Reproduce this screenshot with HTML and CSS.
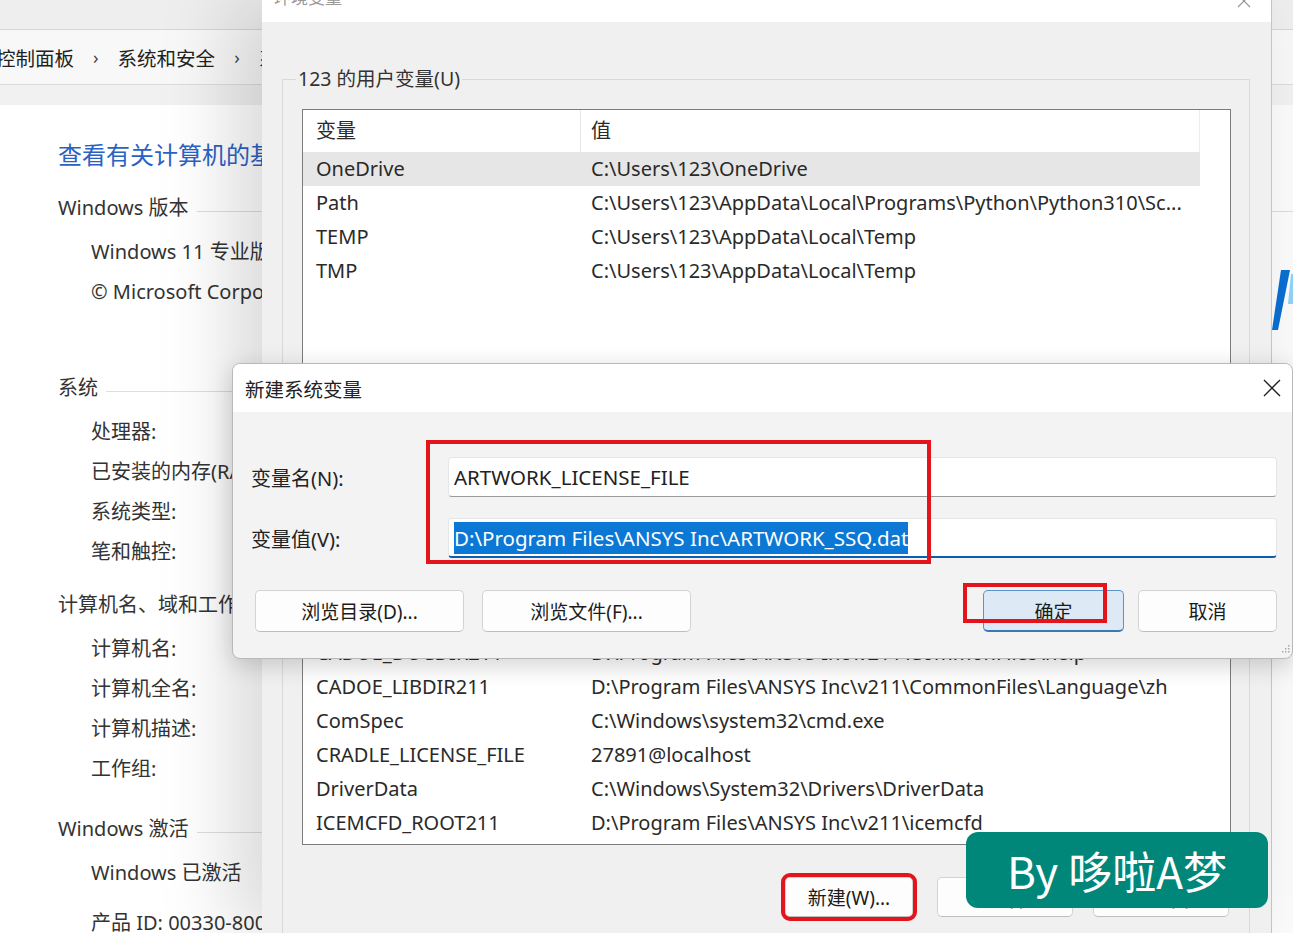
FILE: index.html
```
<!DOCTYPE html>
<html lang="zh-CN">
<head>
    <meta charset="UTF-8">
    <title>环境变量 - 新建系统变量</title>
    <link rel="stylesheet" href="styles.css">
</head>
<body>

<div class="screen">

    <!-- control panel behind everything -->
    <div class="cp">
        <div class="cp-top"></div>
        <div class="cp-crumbs">
            <span class="crumb crumb-first">控制面板</span>
            <span class="sep">›</span>
            <span class="crumb">系统和安全</span>
            <span class="sep">›</span>
            <span class="crumb">系统</span>
        </div>
        <div class="cp-band"></div>
        <div class="cp-body">
            <div class="cp-main">
                <div class="cp-heading">查看有关计算机的基本信息</div>
                <div class="cp-section">Windows 版本</div>
                <div class="cp-item">Windows 11 专业版</div>
                <div class="cp-item">© Microsoft Corporation。保留所有权利。</div>
                <div class="cp-section gap-lg">系统</div>
                <div class="cp-item">处理器:</div>
                <div class="cp-item">已安装的内存(RAM):</div>
                <div class="cp-item">系统类型:</div>
                <div class="cp-item">笔和触控:</div>
                <div class="cp-section">计算机名、域和工作组设置</div>
                <div class="cp-item">计算机名:</div>
                <div class="cp-item">计算机全名:</div>
                <div class="cp-item">计算机描述:</div>
                <div class="cp-item">工作组:</div>
                <div class="cp-section gap-md">Windows 激活</div>
                <div class="cp-item">Windows 已激活</div>
                <div class="cp-item cp-item-last">产品 ID: 00330-80000-00000-AA000</div>
            </div>
            <div class="cp-aside">
                <div class="cp-aside-line"></div>
                <svg class="win-logo" width="21" height="62" viewBox="0 0 21 62">
                    <polygon points="9,0 18,0 6,60 0,60" fill="#0a6fd1"/>
                    <polygon points="19,4 21,4 21,34 16,34" fill="#8fd3f4"/>
                </svg>
            </div>
        </div>
    </div>

    <!-- environment variables window -->
    <div class="env">
        <div class="env-title">
            <span class="env-title-text">环境变量</span>
            <svg class="env-close" width="14" height="14" viewBox="0 0 14 14">
                <path d="M1 1 L13 13 M13 1 L1 13" stroke="#999" stroke-width="1.2"/>
            </svg>
        </div>

        <fieldset class="group group-user">
            <legend>123 的用户变量(U)</legend>
            <div class="listbox listbox-user">
                <div class="lv-row lv-head"><span class="col-name">变量</span><span class="col-val">值</span></div>
                <div class="lv-row selected"><span class="col-name">OneDrive</span><span class="col-val">C:\Users\123\OneDrive</span></div>
                <div class="lv-row"><span class="col-name">Path</span><span class="col-val">C:\Users\123\AppData\Local\Programs\Python\Python310\Sc...</span></div>
                <div class="lv-row"><span class="col-name">TEMP</span><span class="col-val">C:\Users\123\AppData\Local\Temp</span></div>
                <div class="lv-row"><span class="col-name">TMP</span><span class="col-val">C:\Users\123\AppData\Local\Temp</span></div>
            </div>
            <div class="btn-row">
                <button class="btn">新建(N)...</button>
                <button class="btn">编辑(E)...</button>
                <button class="btn">删除(D)</button>
            </div>
        </fieldset>

        <fieldset class="group group-sys">
            <legend>系统变量(S)</legend>
            <div class="listbox listbox-sys">
                <div class="lv-row lv-head"><span class="col-name">变量</span><span class="col-val">值</span></div>
                <div class="lv-row"><span class="col-name">ANSYS211_DIR</span><span class="col-val">D:\Program Files\ANSYS Inc\v211\ANSYS</span></div>
                <div class="lv-row"><span class="col-name">ANSYSLIC_DIR</span><span class="col-val">D:\Program Files\ANSYS Inc\Shared Files\Licensing</span></div>
                <div class="lv-row"><span class="col-name">AWP_ROOT211</span><span class="col-val">D:\Program Files\ANSYS Inc\v211</span></div>
                <div class="lv-row"><span class="col-name">CADOE_DOCDIR211</span><span class="col-val">D:\Program Files\ANSYS Inc\v211\CommonFiles\help</span></div>
                <div class="lv-row"><span class="col-name">CADOE_LIBDIR211</span><span class="col-val">D:\Program Files\ANSYS Inc\v211\CommonFiles\Language\zh</span></div>
                <div class="lv-row"><span class="col-name">ComSpec</span><span class="col-val">C:\Windows\system32\cmd.exe</span></div>
                <div class="lv-row"><span class="col-name">CRADLE_LICENSE_FILE</span><span class="col-val">27891@localhost</span></div>
                <div class="lv-row"><span class="col-name">DriverData</span><span class="col-val">C:\Windows\System32\Drivers\DriverData</span></div>
                <div class="lv-row"><span class="col-name">ICEMCFD_ROOT211</span><span class="col-val">D:\Program Files\ANSYS Inc\v211\icemcfd</span></div>
            </div>
            <div class="btn-row">
                <button class="btn btn-new">新建(W)...</button>
                <button class="btn">编辑(I)...</button>
                <button class="btn">删除(L)</button>
            </div>
        </fieldset>
    </div>

    <!-- new system variable dialog -->
    <div class="newvar">
        <div class="nv-title">
            <span>新建系统变量</span>
            <svg class="nv-close" width="18" height="18" viewBox="0 0 18 18">
                <path d="M1 1 L17 17 M17 1 L1 17" stroke="#222" stroke-width="1.4"/>
            </svg>
        </div>
        <div class="nv-body">
            <div class="nv-field">
                <label class="nv-label">变量名(N):</label>
                <div class="nv-input">ARTWORK_LICENSE_FILE</div>
            </div>
            <div class="nv-field">
                <label class="nv-label">变量值(V):</label>
                <div class="nv-input focused"><span class="sel">D:\Program Files\ANSYS Inc\ARTWORK_SSQ.dat</span></div>
            </div>
            <div class="nv-buttons">
                <button class="btn btn-wide">浏览目录(D)...</button>
                <button class="btn btn-wide">浏览文件(F)...</button>
                <span class="spacer"></span>
                <button class="btn btn-ok">确定</button>
                <button class="btn btn-cancel">取消</button>
            </div>
            <svg class="grip" width="10" height="10" viewBox="0 0 10 10">
                <rect x="8" y="2" width="1.5" height="1.5" fill="#aaa"/>
                <rect x="5" y="5" width="1.5" height="1.5" fill="#aaa"/>
                <rect x="8" y="5" width="1.5" height="1.5" fill="#aaa"/>
                <rect x="2" y="8" width="1.5" height="1.5" fill="#aaa"/>
                <rect x="5" y="8" width="1.5" height="1.5" fill="#aaa"/>
                <rect x="8" y="8" width="1.5" height="1.5" fill="#aaa"/>
            </svg>
        </div>
        <div class="mark mark-fields"></div>
        <div class="mark mark-ok"></div>
    </div>

    <div class="watermark">By 哆啦A梦</div>

</div>

</body>
</html>
```

FILE: styles.css
```
body {
    margin: 0;
    padding: 0;
    background-color: #ffffff;
    font-family: "Noto Sans", "Noto Sans CJK SC", sans-serif;
    color: #1b1b1b;
}

.screen {
    position: relative;
    width: 1293px;
    height: 933px;
    overflow: hidden;
}

/* ---------- control panel (background) ---------- */

.cp {
    width: 100%;
    height: 100%;
    background-color: #ffffff;
}

.cp-top {
    height: 29px;
    background-color: #eeeeee;
    border-bottom: 1px solid #d6d6d6;
}

.cp-crumbs {
    height: 54px;
    background-color: #f8f8f8;
    border-bottom: 1px solid #dcdcdc;
    display: flex;
    align-items: center;
    font-size: 19.5px;
    color: #222;
    white-space: nowrap;
}

.crumb-first {
    margin-left: -4px;
}

.sep {
    margin: 0 19px 0 19px;
    font-size: 18px;
    color: #444;
}

.cp-band {
    height: 20px;
    background-color: #f1f1f1;
}

.cp-body {
    display: flex;
}

.cp-main {
    flex: 1;
    padding: 30px 0 0 58px;
    white-space: nowrap;
    overflow: hidden;
    color: #333;
    font-size: 20px;
}

.cp-heading {
    line-height: 40px;
    font-size: 24px;
    color: #2a62c4;
}

.cp-section {
    display: flex;
    align-items: center;
    line-height: 40px;
    margin-top: 13px;
    margin-bottom: 4px;
}

.cp-section::after {
    content: "";
    flex: 1;
    margin: 6px 0 0 8px;
    border-top: 1px solid #dedede;
}

.cp-section.gap-lg {
    margin-top: 56px;
}

.cp-section.gap-md {
    margin-top: 20px;
}

.cp-item {
    line-height: 40px;
    padding-left: 33px;
}

.cp-item-last {
    margin-top: 10px;
}

.cp-aside {
    width: 21px;
    background-color: #fbfbfb;
}

.cp-aside-line {
    margin-top: 106px;
    border-top: 1px solid #dcdcdc;
}

.win-logo {
    display: block;
    margin-top: 58px;
}

/* ---------- environment variables window ---------- */

.env {
    position: absolute;
    left: 262px;
    top: 0;
    width: 1009px;
    height: 933px;
    background-color: #f0f0f0;
    border-right: 1px solid #c4c4c4;
    box-shadow: -30px 0 70px rgba(0, 0, 0, 0.15);
    font-size: 20px;
}

.env-title {
    height: 22px;
    background-color: #ffffff;
    display: flex;
    justify-content: space-between;
    overflow: hidden;
}

.env-title-text {
    margin: -14px 0 0 12px;
    line-height: 24px;
    font-size: 17px;
    color: #999;
}

.env-close {
    margin: -6px 20px 0 0;
}

.group {
    margin: 0 21px 0 20px;
    padding: 18px 18px 10px 19px;
    border: 1px solid #d9d9d9;
    min-width: 0;
}

.group legend {
    margin-left: -6px;
    padding: 0 2px;
    line-height: 24px;
    font-size: 19.5px;
    color: #333;
}

.group-user {
    margin-top: 45px;
}

.group-sys {
    margin-top: 4px;
    padding-top: 19px;
    height: 600px;
}

.listbox {
    border: 1px solid #7c7c7c;
    background-color: #ffffff;
    padding-right: 30px;
    overflow: hidden;
}

.listbox-user {
    height: 268px;
}

.listbox-sys {
    height: 352px;
}

.lv-row {
    display: flex;
    height: 34px;
    line-height: 34px;
    white-space: nowrap;
    color: #2a2a2a;
}

.lv-row.lv-head {
    height: 42px;
    line-height: 42px;
    box-shadow: inset -1px 0 0 #ececec;
}

.lv-row.selected {
    background-color: #e6e6e6;
}

.col-name {
    width: 264px;
    padding-left: 13px;
    flex-shrink: 0;
}

.col-val {
    padding-left: 11px;
}

.lv-head .col-val {
    border-left: 1px solid #e6e6e6;
    padding-left: 10px;
}

.btn-row {
    display: flex;
    justify-content: flex-end;
    gap: 20px;
    margin-top: 14px;
    padding-right: 2px;
}

.group-sys .btn-row {
    margin-top: 32px;
}

.btn {
    height: 40px;
    width: 136px;
    border: 1px solid #d3d3d3;
    border-bottom-color: #bdbdbd;
    border-radius: 5px;
    background-color: #fdfdfd;
    font-family: "Noto Sans", "Noto Sans CJK SC", sans-serif;
    font-size: 19px;
    color: #1b1b1b;
    padding: 0;
}

.btn-new {
    width: 128px;
    margin-right: 4px;
    outline: 4px solid #e3141c;
}

/* ---------- new system variable dialog ---------- */

.newvar {
    position: absolute;
    left: 232px;
    top: 363px;
    width: 1061px;
    height: 296px;
    box-sizing: border-box;
    border: 1px solid #b9b9b9;
    border-radius: 8px;
    background-color: #f3f3f3;
    box-shadow: 0 6px 24px rgba(0, 0, 0, 0.18);
    overflow: hidden;
    font-size: 20px;
}

.nv-title {
    height: 48px;
    background-color: #ffffff;
    display: flex;
    align-items: center;
    justify-content: space-between;
    padding: 0 11px 0 12px;
    font-size: 19.5px;
    color: #222;
}

.nv-body {
    position: relative;
    padding: 45px 15px 0 18px;
    height: 200px;
}

.nv-field {
    display: flex;
    align-items: center;
    margin-bottom: 21px;
}

.nv-label {
    width: 197px;
    color: #222;
}

.nv-input {
    flex: 1;
    height: 40px;
    box-sizing: border-box;
    padding: 0 5px;
    background-color: #ffffff;
    border: 1px solid #e6e6e6;
    border-bottom: 1px solid #9a9a9a;
    border-radius: 4px;
    line-height: 38px;
    font-size: 20.5px;
    color: #222;
    white-space: nowrap;
}

.nv-input.focused {
    border-bottom: 2px solid #0a5fb4;
}

.sel {
    background-color: #0a78d4;
    color: #ffffff;
    padding: 2px 0;
}

.nv-buttons {
    display: flex;
    gap: 18px;
    margin-top: 32px;
    padding-left: 4px;
}

.nv-buttons .btn {
    height: 42px;
}

.btn-wide {
    width: 209px;
}

.spacer {
    flex: 1;
}

.btn-ok {
    width: 141px;
    margin-right: -4px;
    background-color: #dde9f5;
    border: 1px solid #5b93cc;
    border-bottom: 2px solid #3a78b8;
}

.btn-cancel {
    width: 139px;
}

.grip {
    position: absolute;
    right: 2px;
    bottom: 4px;
}

.mark {
    position: absolute;
    border: 4px solid #e3141c;
    box-sizing: border-box;
}

.mark-fields {
    left: 193px;
    top: 76px;
    width: 505px;
    height: 124px;
}

.mark-ok {
    left: 730px;
    top: 219px;
    width: 144px;
    height: 40px;
}

/* ---------- watermark ---------- */

.watermark {
    position: absolute;
    left: 966px;
    top: 832px;
    width: 302px;
    height: 76px;
    border-radius: 12px;
    background-color: #00877a;
    color: #ffffff;
    font-family: "Noto Sans CJK SC", sans-serif;
    font-size: 44px;
    line-height: 76px;
    text-align: center;
}
```
